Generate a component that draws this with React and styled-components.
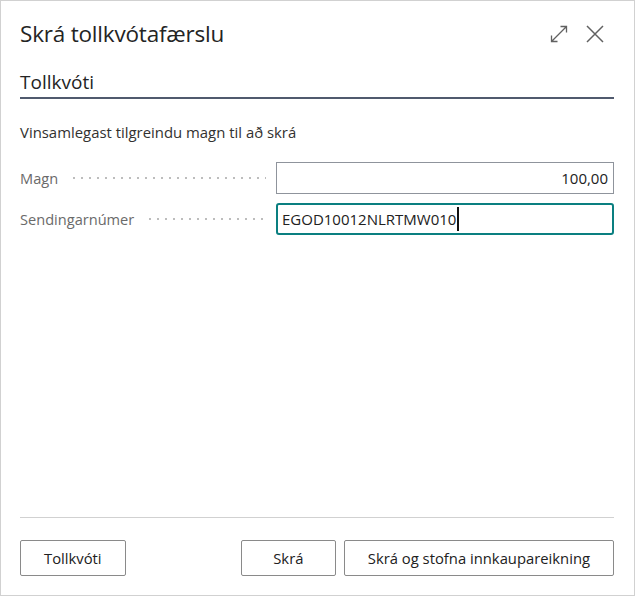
import React from 'react';
import styled, { createGlobalStyle } from 'styled-components';

const GlobalStyle = createGlobalStyle`
    body {
        margin: 0;
        background: #fff;
        font-family: 'Segoe UI', 'Open Sans', 'Noto Sans', sans-serif;
        color: #212121;
    }
`;

const Dialog = styled.div`
    width: 635px;
    height: 596px;
    box-sizing: border-box;
    border: 1px solid #d1d1d1;
    display: flex;
    flex-direction: column;
    padding: 0 20px 19px 19px;
`;

const Header = styled.div`
    display: flex;
    align-items: center;
    justify-content: space-between;
    height: 30px;
    padding-top: 18px;
`;

const Title = styled.h1`
    margin: 0;
    font-size: 22.5px;
    font-weight: 400;
    line-height: 30px;
    letter-spacing: -0.2px;
    color: #242424;
`;

const Tools = styled.div`
    display: flex;
    align-items: center;
    gap: 18px;
    margin-right: 10px;
`;

const IconButton = styled.button`
    border: 0;
    background: none;
    padding: 0;
    width: 18px;
    height: 18px;
    display: flex;
    color: #616161;
`;

const Tab = styled.div`
    margin-top: 21px;
    font-size: 19px;
    line-height: 24px;
    padding-bottom: 3px;
    border-bottom: 2px solid #505a6e;
    color: #242424;
`;

const Intro = styled.p`
    margin: 23px 0 0;
    font-size: 14.9px;
    line-height: 20px;
    color: #323130;
`;

const Form = styled.div`
    margin-top: 20px;
    display: grid;
    grid-template-columns: 246px 1fr;
    column-gap: 10px;
    row-gap: 9px;
`;

const Label = styled.div`
    display: flex;
    align-items: center;
    gap: 12px;
    font-size: 14.6px;
    color: #6a6a6a;
`;

const Leader = styled.span`
    flex: 1;
    height: 2px;
    background-image: radial-gradient(circle, #bdbdbd 0.8px, transparent 1.2px);
    background-size: 8px 2px;
    background-repeat: repeat-x;
`;

const Field = styled.div`
    height: 32px;
    box-sizing: border-box;
    display: flex;
    align-items: center;
    justify-content: ${p => (p.$numeric ? 'flex-end' : 'flex-start')};
    padding: 0 ${p => (p.$focused ? '4px' : '5px')};
    border: ${p => (p.$focused ? '2px solid #0a7f80' : '1px solid #8f949c')};
    border-radius: ${p => (p.$focused ? '3px' : '0')};
    font-size: 15px;
    color: #212121;
`;

const Caret = styled.span`
    width: 2px;
    height: 24px;
    margin-left: 1px;
    background: #111;
`;

const Footer = styled.div`
    margin-top: auto;
    border-top: 1px solid #d1d1d1;
    padding-top: 22px;
    display: flex;
    align-items: center;
    gap: 8px;
`;

const Spacer = styled.div`
    flex: 1;
`;

const Button = styled.button`
    height: 36px;
    min-width: 95px;
    padding: 0 23px;
    box-sizing: border-box;
    background: #fff;
    border: 1px solid #8a8a8a;
    border-radius: 2px;
    font-family: inherit;
    font-size: 14.8px;
    font-weight: 500;
    color: #212121;
`;

const ExpandIcon = () => (
    <svg width="18" height="18" viewBox="0 0 18 18" fill="none" stroke="currentColor" strokeWidth="1.3">
        <path d="M1.5 16.5L16.5 1.5M10.5 1.5h6v6M1.5 10.5v6h6" />
    </svg>
);

const CloseIcon = () => (
    <svg width="18" height="18" viewBox="0 0 18 18" fill="none" stroke="currentColor" strokeWidth="1.5">
        <path d="M1 1l16 16M17 1L1 17" />
    </svg>
);

const App = () => (
    <>
        <GlobalStyle />
        <Dialog>
            <Header>
                <Title>Skrá tollkvótafærslu</Title>
                <Tools>
                    <IconButton aria-label="Stækka">
                        <ExpandIcon />
                    </IconButton>
                    <IconButton aria-label="Loka">
                        <CloseIcon />
                    </IconButton>
                </Tools>
            </Header>
            <Tab>Tollkvóti</Tab>
            <Intro>Vinsamlegast tilgreindu magn til að skrá</Intro>
            <Form>
                <Label>
                    Magn
                    <Leader />
                </Label>
                <Field $numeric>100,00</Field>
                <Label>
                    Sendingarnúmer
                    <Leader />
                </Label>
                <Field $focused>
                    EGOD10012NLRTMW010
                    <Caret />
                </Field>
            </Form>
            <Footer>
                <Button>Tollkvóti</Button>
                <Spacer />
                <Button>Skrá</Button>
                <Button>Skrá og stofna innkaupareikning</Button>
            </Footer>
        </Dialog>
    </>
);

export default App;
